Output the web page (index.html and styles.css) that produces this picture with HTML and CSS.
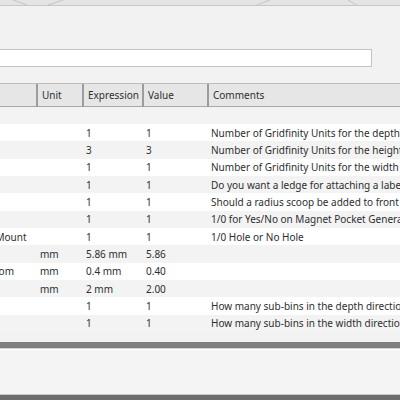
FILE: index.html
```html
<!DOCTYPE html>
<html>
	<head>
		<title>Parameters</title>
		<meta name="viewport" content="width=device-width, initial-scale=1">
		<link rel="stylesheet" href="styles.css">
	</head>
	<body>

		<div class="tabStrip">
			<svg class="tabEdges" width="400" height="6" viewBox="0 0 400 6">
				<path d="M13 0 L27 5 M48 5 L63 0 M257 5 L270 0 M348 0 L358 6" stroke="#c4c4c4" stroke-width="1" fill="none"/>
			</svg>
		</div>

		<div class="panel">
			<div class="filterRow">
				<input class="filterBox" type="text">
			</div>

			<div class="gridWrap">
				<table class="grid">
					<colgroup>
						<col class="colName">
						<col class="colUnit">
						<col class="colExpr">
						<col class="colValue">
						<col class="colComment">
					</colgroup>
					<thead>
						<tr>
							<th>Name</th>
							<th>Unit</th>
							<th>Expression</th>
							<th>Value</th>
							<th>Comments</th>
						</tr>
					</thead>
					<tbody>
						<tr class="groupRow"><td>User Parameters</td><td></td><td></td><td></td><td></td></tr>
						<tr><td>BinDepth</td><td></td><td>1</td><td>1</td><td>Number of Gridfinity Units for the depth</td></tr>
						<tr><td>BinHeight</td><td></td><td>3</td><td>3</td><td>Number of Gridfinity Units for the height</td></tr>
						<tr><td>BinWidth</td><td></td><td>1</td><td>1</td><td>Number of Gridfinity Units for the width</td></tr>
						<tr><td>LabelLedge</td><td></td><td>1</td><td>1</td><td>Do you want a ledge for attaching a label</td></tr>
						<tr><td>FrontScoop</td><td></td><td>1</td><td>1</td><td>Should a radius scoop be added to front</td></tr>
						<tr><td>MagnetPockets</td><td></td><td>1</td><td>1</td><td>1/0 for Yes/No on Magnet Pocket Generation</td></tr>
						<tr><td>MagnetScrewHoleMount</td><td></td><td>1</td><td>1</td><td>1/0 Hole or No Hole</td></tr>
						<tr><td>LipHeight</td><td>mm</td><td>5.86 mm</td><td>5.86</td><td></td></tr>
						<tr><td>BaseClearanceBottom</td><td>mm</td><td>0.4 mm</td><td>0.40</td><td></td></tr>
						<tr><td>WallWidth</td><td>mm</td><td>2 mm</td><td>2.00</td><td></td></tr>
						<tr><td>DepthBins</td><td></td><td>1</td><td>1</td><td>How many sub-bins in the depth direction</td></tr>
						<tr><td>WidthBins</td><td></td><td>1</td><td>1</td><td>How many sub-bins in the width direction</td></tr>
					</tbody>
				</table>
			</div>
		</div>

		<div class="scrollBar"></div>

		<div class="footer"></div>
		<div class="bottomBar"></div>

	</body>
</html>
```

FILE: styles.css
```css
body
{
	margin: 0;
	width: 400px;
	height: 400px;
	overflow: hidden;
	background-color: #f2f2f2;
	font-family: "Noto Sans", "Open Sans", sans-serif;
	font-size: 10px;
	color: #2e2e2e;
}

.tabStrip
{
	height: 5px;
	background-color: #e4e4e4;
	border-bottom: 1px solid #c8c8c8;
}

.tabEdges
{
	display: block;
}

.panel
{
	background-color: #f2f2f2;
	height: 336px;
}

.filterRow
{
	padding-top: 43px;
	height: 18px;
}

.filterBox
{
	display: block;
	box-sizing: border-box;
	margin: 0 0 0 -2px;
	width: 374px;
	height: 18px;
	padding: 0;
	border: 1px solid #c4c4c4;
	background-color: white;
	outline: none;
}

.gridWrap
{
	margin-top: 16px;
	overflow: hidden;
	height: 258px;
	border-top: 1px solid #bcbcbc;
}

.grid
{
	margin-left: -93px;
	table-layout: fixed;
	border-collapse: collapse;
	width: 700px;
	line-height: 12px;
}

.colName { width: 130px; }
.colUnit { width: 46px; }
.colExpr { width: 60px; }
.colValue { width: 65px; }
.colComment { width: 399px; }

.grid th
{
	box-sizing: border-box;
	height: 22px;
	padding: 0 0 0 4px;
	text-align: left;
	font-weight: normal;
	font-size: 10px;
	color: #2e2e2e;
	background-color: #e6e6e6;
	border-right: 2px solid #9c9c9c;
	border-bottom: 1px solid #a8a8a8;
	white-space: nowrap;
	overflow: hidden;
}

.grid td
{
	box-sizing: border-box;
	height: 17.35px;
	padding: 0 0 0 3px;
	white-space: nowrap;
	overflow: hidden;
	background-color: white;
}

.grid tr:nth-child(odd) td
{
	background-color: #f3f3f3;
}

.grid .groupRow td
{
	height: 18px;
	background-color: #f0f0f0;
	color: #f0f0f0;
}

.scrollBar
{
	height: 6px;
	background-color: #7e7e7e;
	border-bottom: 1px solid #d0d0d0;
}

.footer
{
	height: 44px;
	background-color: #f4f4f4;
	border-top: 1px solid white;
	border-bottom: 1px solid #c8c8c8;
}

.bottomBar
{
	height: 10px;
	background-color: #6c6c6c;
}
```
